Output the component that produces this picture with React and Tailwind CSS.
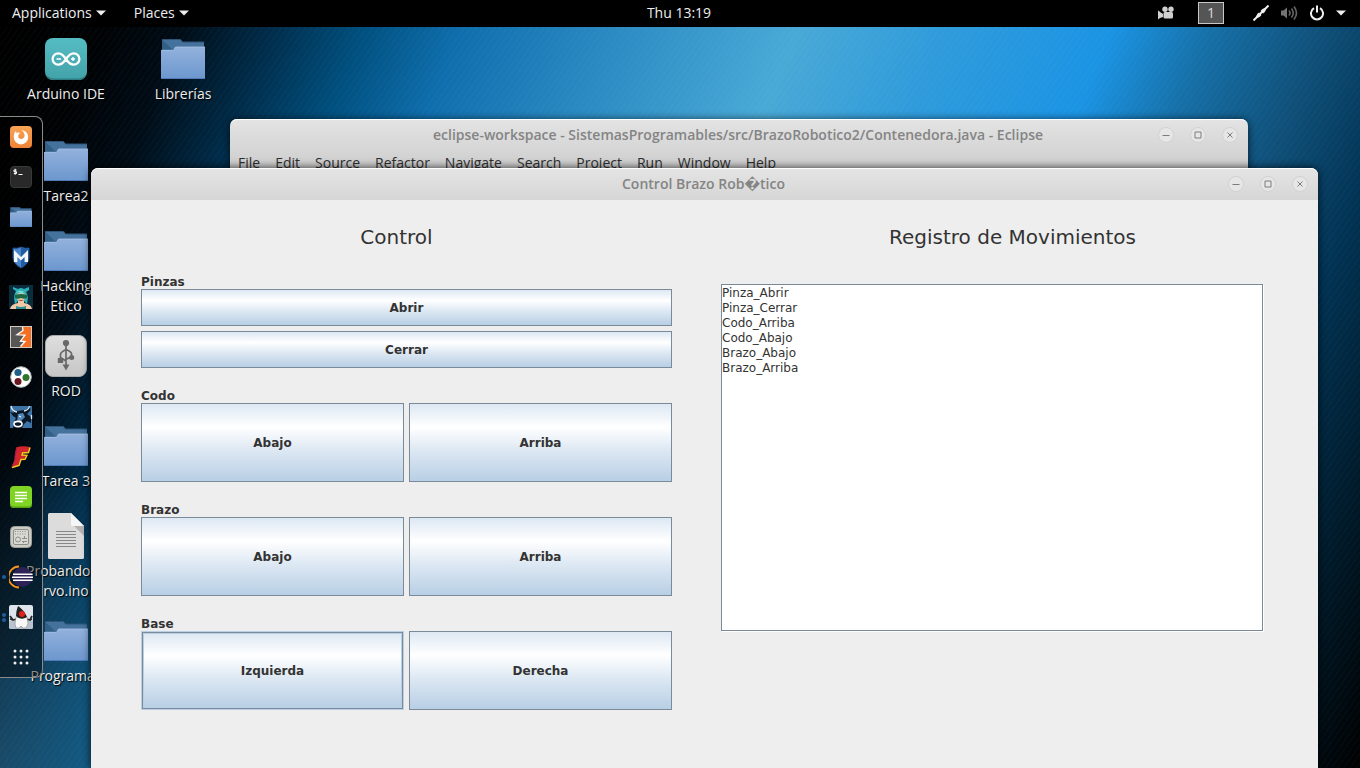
import React from "react";

const UI = "font-['Open_Sans','Noto_Sans',sans-serif]";

function Caret() {
  return (
    <svg viewBox="0 0 10 6" className="h-[6px] w-[10px]" fill="#eee" aria-hidden="true">
      <path d="M0 .5h10L5 5.5z" />
    </svg>
  );
}

function Folder({ className }) {
  return (
    <svg viewBox="0 0 44 40" className={className} aria-hidden="true">
      <defs>
        <linearGradient id="folderFront" x1="0" y1="0" x2="0" y2="1">
          <stop offset="0" stopColor="#92b1dc" />
          <stop offset="1" stopColor="#6c97ce" />
        </linearGradient>
      </defs>
      <path d="M1 .5h18.500l2 2.500H43v12H1z" fill="#44729c" />
      <path d="M1 .5l10 9.500H1z" fill="#335f87" />
      <path d="M1 .5h18.500l2 2.500H43" fill="none" stroke="#2e5478" />
      <path d="M0 11.500h12.500l2-3.500H44v32H0z" fill="url(#folderFront)" />
      <path d="M0 11.500h12.500l2-3.500H44" fill="none" stroke="#a9c3e6" strokeWidth=".8" />
      <path d="M0 39.500h44" stroke="#4f7cb8" />
    </svg>
  );
}

function Arduino() {
  return (
    <svg viewBox="0 0 42 42" className="size-[42px]" aria-hidden="true">
      <defs>
        <linearGradient id="ard" x1="0" y1="0" x2="0" y2="1">
          <stop offset="0" stopColor="#55bcc4" />
          <stop offset="1" stopColor="#43a2a9" />
        </linearGradient>
      </defs>
      <rect width="42" height="42" rx="8" fill="url(#ard)" />
      <path d="M0 33a8 9 0 0 0 8 9h26a8 9 0 0 0 8-9a8 8 0 0 1-8 7.500H8A8 8 0 0 1 0 33" fill="#2f7c82" />
      <path d="M21 21c-2.500-3.800-5-5.700-7.700-5.700a5.700 5.700 0 0 0 0 11.400c2.700 0 5.200-1.900 7.700-5.700c2.500-3.800 5-5.700 7.700-5.700a5.700 5.700 0 0 1 0 11.400c-2.700 0-5.200-1.900-7.700-5.700z" fill="none" stroke="#fff" strokeWidth="2.300" />
      <path d="M11.500 21h4.500M26 21h4M28 19v4" stroke="#fff" strokeWidth="1.400" />
    </svg>
  );
}

function Usb() {
  return (
    <svg viewBox="0 0 42 42" className="size-[42px]" aria-hidden="true">
      <defs>
        <linearGradient id="usb" x1="0" y1="0" x2="0" y2="1">
          <stop offset="0" stopColor="#dedede" />
          <stop offset="1" stopColor="#c6c6c6" />
        </linearGradient>
      </defs>
      <rect x=".5" y=".5" width="41" height="41" rx="7.500" fill="url(#usb)" stroke="#a9a9a9" />
      <path d="M21 8v23M21 26l-5.500-3.500v-3.500q0-1.500 5.500-4.500M21 24.500l5.500-3v-3q0-1.500-5.500-4" fill="none" stroke="#686868" strokeWidth="1.700" />
      <g fill="#686868">
        <circle cx="21" cy="8" r="3.100" />
        <path d="M17.500 29.500h7L21 35.500z" />
        <rect x="12.800" y="23" width="5.400" height="5" />
        <circle cx="26.700" cy="22.500" r="2.500" />
      </g>
    </svg>
  );
}

function TextFile() {
  return (
    <svg viewBox="0 0 36 46" className="-mb-0.5 h-[46px] w-[36px]" aria-hidden="true">
      <path d="M1.500 0H23l13 13v31.500q0 1.500-1.500 1.500h-33Q0 46 0 44.500v-43Q0 0 1.500 0z" fill="#dcdcdc" />
      <path d="M24 11l12 12V13z" fill="#b2b2b2" />
      <path d="M23 0l13 13H24.500Q23 13 23 11.500z" fill="#f6f6f6" />
      <path d="M8 18.500h20M8 21.500h20M8 24.500h20M8 27.500h20M8 30.500h20M8 33.500h20" stroke="#878787" />
    </svg>
  );
}

function DesktopItem({ place, label, children }) {
  return (
    <a href="#" className={`absolute flex flex-col items-center text-[14px] leading-5 text-[#eeeeee] [text-shadow:1px_1px_1px_#000] ${place}`}>
      {children}
      <span className="mt-1 whitespace-pre text-center">{label}</span>
    </a>
  );
}

function DockSvg({ children }) {
  return (
    <svg viewBox="0 0 24 24" className="size-6" aria-hidden="true">
      {children}
    </svg>
  );
}

const dock = [
  {
    name: "Firefox",
    art: (
      <>
        <defs>
          <linearGradient id="ff" x1="0" y1="0" x2="0" y2="1">
            <stop offset="0" stopColor="#f9a456" />
            <stop offset="1" stopColor="#ee8236" />
          </linearGradient>
        </defs>
        <rect x="1" y="1" width="22" height="22" rx="4" fill="url(#ff)" />
        <path d="M5 9.500c.3-1.500 1-2.600 2-3.200c0 .8.300 1.400 1 1.600c1.300-.6 2.500-.4 3.300.3c-1.300.2-1.700.8-1.500 1.600c-.9.700-.9 2.900.6 3.700c2.600 1.200 5-.3 5.200-2.700c.2-2.300-1-4.400-3.400-5.600c4.200 0 7 3 7 7a7.200 7.200 0 0 1-14.400 0c0-1 0-1.800.2-2.700z" fill="#fff" />
      </>
    ),
  },
  {
    name: "Terminal",
    art: (
      <>
        <rect x="1.500" y="1.500" width="21" height="21" rx="3.500" fill="#292929" stroke="#393939" />
        <path d="M7.500 5H5v1.700h2.500v1.800H4.800M6.200 3.800v6M9.500 9.500h4" fill="none" stroke="#fff" />
      </>
    ),
  },
  { name: "Files" },
  {
    name: "Metasploit",
    art: (
      <>
        <path d="M4 3q4 1 8-1q4 2 8 1v10q-.5 6-8 10q-7.500-4-8-10z" fill="#4a86cc" stroke="#1c4f86" />
        <path d="M12 2q4 2 8 1v10q-.5 6-8 10z" fill="#1f5ca3" />
        <path d="M5 17V5l7 7l7-7v12h-3.400v-5L12 15.500L8.400 12v5z" fill="#f2f5f8" />
      </>
    ),
  },
  {
    name: "Armitage",
    art: (
      <>
        <rect width="24" height="24" fill="#0b2c3d" />
        <path d="M1 24q1-5 8-6v-3h6v3q7 1 8 6z" fill="#f1c9a8" />
        <path d="M6 19q-2-8 1-13l-3-2V2l5 2q3-2 6 0l5-2v3l-3 2q3 4 1 12l-3-3H9z" fill="#2fb0b6" />
        <path d="M8 9q4-3 8 0v5q-4 5-8 0z" fill="#edc29e" />
        <path d="M6 10q6-2 12 0v3q-3 1.500-6 0q-3 1.500-6 0z" fill="#1a6845" />
        <path d="M7 8q3-5 10 0l-2-1l-3 2l-2-2z" fill="#6ae0dc" />
        <path d="M7 21q5 2 10 0v3H7z" fill="#2b8f94" />
        <path d="M10.500 15.500h3" stroke="#b63535" />
      </>
    ),
  },
  {
    name: "Burp Suite",
    art: (
      <>
        <rect x="1.500" y="1.500" width="21" height="21" fill="#f26f24" />
        <path d="M2 2h11.500l.5 3l-6 4.500l7 1L11 16l5 .5L11 22H2z" fill="#565656" />
        <path d="M13.500 2l.5 3.500l-6 4.300l8 .4l-4.500 6l4.500.3l-4.500 5" fill="none" stroke="#fff" strokeWidth="1.300" />
        <rect x="1.500" y="1.500" width="21" height="21" fill="none" stroke="#d2c9c0" />
      </>
    ),
  },
  {
    name: "Maltego",
    art: (
      <>
        <circle cx="12" cy="12" r="10.300" fill="#fff" stroke="#b5b5b5" />
        <circle cx="9" cy="7.500" r="3.600" fill="#1f5f89" />
        <circle cx="17" cy="12.500" r="3.500" fill="#30742f" />
        <circle cx="9" cy="16.500" r="3.500" fill="#6d1421" />
      </>
    ),
  },
  {
    name: "BeEF",
    art: (
      <>
        <rect x="1" y="1" width="22" height="22" fill="#3d73a5" />
        <path d="M3 3q2 3 6 3l6-1q5 0 5-4q3 3 0 6l-2 2l4 3v6l-4-2l-3 3l-2 4H4l1-6l2-4l-3-2l-3-4l4 1z" fill="#0b1828" />
        <path d="M2 1q1 5 6 6M15 6q5-1 5.500-5M22.500 10v4" fill="none" stroke="#dce8f3" strokeWidth="1.300" />
        <path d="M9 9l5-1l2 4l-4 4l-4 1z" fill="#5488b8" />
        <ellipse cx="9" cy="19" rx="4" ry="2.600" fill="none" stroke="#fff" strokeWidth="1.600" />
        <path d="M10 11l2 1" stroke="#fff" />
      </>
    ),
  },
  {
    name: "Faraday",
    art: (
      <>
        <path d="M7 2.500Q13 .5 21 2l-2 5.500l-6 .5l-.5 1.500l5 .5l-2 4l-4 .5l-2 6.500l-7 2l3-8z" fill="#d3252d" />
        <path d="M21 2.500l-1.500 5l-6 .5l-.5 2l5 .3l-2 4l-4 .2l-2 6l-7 2" fill="none" stroke="#f2cd20" strokeWidth="1.400" />
        <path d="M8 2.500L6 11v4l-3 7" fill="none" stroke="#a81d4b" />
      </>
    ),
  },
  {
    name: "Notes",
    art: (
      <>
        <rect x="1" y="1" width="22" height="22" rx="4" fill="#80d524" />
        <path d="M1 18v1a4 4 0 0 0 4 4h14a4 4 0 0 0 4-4v-1q-1 3.500-4 3.500H5Q2 21.500 1 18" fill="#53a30d" />
        <path d="M6 7.500h12M6 10.500h12M6 13.500h12M6 16.500h8" stroke="#fff" strokeWidth="1.400" />
      </>
    ),
  },
  {
    name: "Tweaks",
    art: (
      <>
        <rect x="1.500" y="1.500" width="21" height="21" rx="4" fill="#cbcdc6" stroke="#9ea19a" />
        <rect x="4.500" y="4.500" width="15" height="15" rx="1.500" fill="#d8dad3" stroke="#8b8e87" />
        <path d="M6 6.500h12M6 9h12" stroke="#8b8e87" strokeWidth="1.200" strokeDasharray="1 1.400" />
        <circle cx="9" cy="14.500" r="2.500" fill="none" stroke="#8b8e87" />
        <path d="M13 13.500h5M13 16.500h5M15.500 11v3M14.500 16v2" stroke="#8b8e87" />
      </>
    ),
  },
  {
    name: "Eclipse",
    running: 1,
    art: (
      <>
        <path d="M10 1.500a10.500 10.500 0 0 0 0 21" fill="none" stroke="#f7941e" strokeWidth="1.800" />
        <circle cx="13.500" cy="12" r="10" fill="#2c2255" />
        <path d="M4 9.300h19.600M3 12.300h21M4 15.200h19.600" stroke="#fff" strokeWidth="1.500" />
      </>
    ),
  },
  {
    name: "Java",
    running: 2,
    art: (
      <>
        <rect width="24" height="24" rx="2" fill="#dfe5ed" />
        <path d="M0 16h24v6q0 2-2 2H2q-2 0-2-2z" fill="#b9c3d0" />
        <path d="M8 14l-4 1l-3-4M17 14l4 1l2-4M1 14l3 1M23 14l-2 1" fill="none" stroke="#282828" strokeWidth="1.800" />
        <path d="M7 12h11l1 7l-2 4h-3l-2-2l-2 2H7l-1-4z" fill="#f8f8f8" stroke="#777" strokeWidth=".5" />
        <path d="M9 1q-2 5-2 10q5 5 11 1Q15 5 9 1z" fill="#202020" />
        <circle cx="13" cy="9" r="3" fill="#e0201b" />
      </>
    ),
  },
  {
    name: "Show applications",
    art: (
      <g fill="#eee">
        {[6, 12, 18].map((y) => [6, 12, 18].map((x) => <circle key={`${x}-${y}`} cx={x} cy={y} r="1.500" />))}
      </g>
    ),
  },
];

function Dock() {
  return (
    <nav className="absolute top-[89px] left-0 flex w-[43px] flex-col gap-4 rounded-r-[8px] border border-l-0 border-[#8b8b8b] bg-black/40 pt-2 pb-2">
      {dock.map((d) => (
        <button key={d.name} type="button" aria-label={d.name} className="relative flex h-6 items-center justify-center">
          {d.running && (
            <span className="absolute left-[2px] flex flex-col gap-px">
              {Array.from({ length: d.running }, (_, i) => (
                <span key={i} className="size-[4px] rounded-full bg-[#215d9c]" />
              ))}
            </span>
          )}
          {d.art ? <DockSvg>{d.art}</DockSvg> : <Folder className="h-5 w-[22px]" />}
        </button>
      ))}
    </nav>
  );
}

function WindowButton({ label, d }) {
  return (
    <button type="button" aria-label={label} className="flex size-4 items-center justify-center rounded-full border border-[#d2d2d2] bg-[#e6e6e6]">
      <svg viewBox="0 0 8 8" className="size-2 shrink-0" fill="none" stroke="#7c7c7c" aria-hidden="true">
        <path d={d} />
      </svg>
    </button>
  );
}

function TitleBar({ title, className }) {
  return (
    <header className={`flex h-8 items-center border-t border-white pr-[10px] pb-0.5 ${className}`}>
      <h1 className="grow pl-[88px] text-center text-[14px] leading-5 font-semibold text-[#848484]">{title}</h1>
      <div className="flex gap-4">
        <WindowButton label="Minimize" d="M.5 4.500h7" />
        <WindowButton label="Maximize" d="M1 1h6v6h-6z" />
        <WindowButton label="Close" d="M1.500 1.500l5 5M6.500 1.500l-5 5" />
      </div>
    </header>
  );
}

function SwingButton({ children, focused, size }) {
  return (
    <button
      type="button"
      className={`border border-[#7a8a99] bg-[linear-gradient(to_bottom,#dde8f3_0%,#ffffff_30%,#dde8f3_60%,#b8cfe5_100%)] text-[12px] font-bold ${size} ${
        focused ? "m-px shadow-[0_0_0_1px_#b8cfe5,inset_0_0_0_1px_#b8cfe5]" : ""
      }`}
    >
      {children}
    </button>
  );
}

function Group({ title, cols, children }) {
  return (
    <fieldset>
      <legend className="h-[14px] text-[12px] leading-[14px] font-bold">{title}</legend>
      <div className={`grid gap-[5px] ${cols}`}>{children}</div>
    </fieldset>
  );
}

const menus = ["File", "Edit", "Source", "Refactor", "Navigate", "Search", "Project", "Run", "Window", "Help"];
const log = ["Pinza_Abrir", "Pinza_Cerrar", "Codo_Arriba", "Codo_Abajo", "Brazo_Abajo", "Brazo_Arriba"];

export default function App() {
  return (
    <div className={`flex h-screen flex-col overflow-hidden bg-black ${UI}`}>
      <header className="grid h-[27px] shrink-0 grid-cols-[1fr_auto_1fr] items-center bg-black pr-[14px] pb-0.5 pl-3 text-[14px] leading-5 text-[#eeeeee]">
        <nav className="flex gap-7">
          <button type="button" className="flex items-center gap-1">Applications <Caret /></button>
          <button type="button" className="flex items-center gap-1">Places <Caret /></button>
        </nav>
        <time>Thu 13:19</time>
        <div className="flex items-center justify-end">
          <svg viewBox="0 0 16 14" className="mr-6 h-[14px] w-4" fill="#d0d0d0" aria-label="Recorder">
            <circle cx="7" cy="3.200" r="2.700" />
            <circle cx="13" cy="3.200" r="2.700" />
            <rect x="5.500" y="6" width="9.500" height="6.500" rx="1.500" />
            <path d="M0 4.500q1 0 2 1.500l3 2v3l-3 1l-2 1.500z" />
          </svg>
          <button type="button" className="mr-[29px] h-[22px] w-[26px] border border-[#c8c8c8] bg-[#555555] leading-5 text-[#dddddd]">1</button>
          <svg viewBox="0 0 16 16" className="mr-3 size-4" aria-label="Wired network">
            <path d="M.5 15.500L15.500.5" stroke="#eee" strokeWidth="2" />
            <path d="M3 13q0-3.500 3-5.500l2.500 2.500q-2 3-5.500 3zM13 3q0 3.500-3 5.500L7.500 6Q9.500 3 13 3z" fill="#eee" />
          </svg>
          <svg viewBox="0 0 17 16" className="mr-3 h-4 w-[17px]" fill="none" stroke="#666" strokeWidth="1.600" aria-label="Volume">
            <path d="M0 5.500h2.500L6 2.500v11l-3.500-3H0z" fill="#747474" stroke="none" />
            <path d="M8 5.500q2 2.500 0 5M10.500 3.500q3.500 4.500 0 9M13 1.500q5 6.500 0 13" />
          </svg>
          <svg viewBox="0 0 14 16" className="mr-3 h-4 w-[14px]" fill="none" stroke="#eee" strokeWidth="2" aria-label="Power">
            <path d="M4 3.200a6 6 0 1 0 6 0M7 .5v7" />
          </svg>
          <Caret />
        </div>
      </header>

      <main className="relative grow overflow-hidden bg-[repeating-linear-gradient(125deg,rgba(255,255,255,0.02)_0px_1px,transparent_2px_5px),radial-gradient(circle_at_0%_100%,rgba(50,95,120,0.5)_0px,transparent_320px),linear-gradient(112deg,#000_0%,#000204_6%,#000c16_11%,#003050_17%,#00507f_22%,#0f6fae_28%,#2b8ac2_37%,#49a9d6_48%,#2f9bdb_57%,#1b94e4_67%,#1670a8_73%,#0f4f78_80%,#013354_86%,#001a2a_93%,#000_100%)]">
        <DesktopItem place="top-[11px] left-[20px] w-[92px]" label="Arduino IDE"><Arduino /></DesktopItem>
        <DesktopItem place="top-[12px] left-[137px] w-[92px]" label="Librerías"><Folder className="mb-px h-10 w-11" /></DesktopItem>
        <DesktopItem place="top-[114px] left-[20px] w-[92px]" label="Tarea2"><Folder className="mb-px h-10 w-11" /></DesktopItem>
        <DesktopItem place="top-[204px] left-[20px] w-[92px]" label={"Hacking\nEtico"}><Folder className="mb-px h-10 w-11" /></DesktopItem>
        <DesktopItem place="top-[308px] left-[20px] w-[92px]" label="ROD"><Usb /></DesktopItem>
        <DesktopItem place="top-[399px] left-[20px] w-[92px]" label="Tarea 3"><Folder className="mb-px h-10 w-11" /></DesktopItem>
        <DesktopItem place="top-[486px] left-[20px] w-[92px]" label={"ProbandoSe\nrvo.ino"}><TextFile /></DesktopItem>
        <DesktopItem place="top-[594px] left-[20px] w-[92px]" label="Programas"><Folder className="mb-px h-10 w-11" /></DesktopItem>

        <Dock />

        <section className="absolute top-[92px] right-[112px] left-[230px] h-[400px] rounded-t-[7px] bg-linear-to-b from-[#e4e4e4] to-[#cccccc] to-[52px] shadow-[0_1px_8px_rgba(0,0,0,0.75)]">
          <TitleBar title="eclipse-workspace - SistemasProgramables/src/BrazoRobotico2/Contenedora.java - Eclipse" className="rounded-t-[7px]" />
          <nav className="flex gap-[15px] pt-[2px] pl-2 text-[14px] leading-5 text-[#2e2e2e]">
            {menus.map((m) => (
              <button key={m} type="button">{m}</button>
            ))}
          </nav>
        </section>

        <section className="absolute top-[141px] right-[42px] bottom-0 left-[91px] rounded-t-[7px] bg-[#eeeeee] shadow-[0_0_8px_rgba(0,0,0,0.8)]">
          <TitleBar
            title={<>Control Brazo Rob<span className="font-['DejaVu_Sans',sans-serif]">{"\uFFFD"}</span>tico</>}
            className="rounded-t-[7px] bg-linear-to-b from-[#e4e4e4] to-[#d6d6d6]"
          />
          <div className="grid grid-cols-[531fr_542fr] gap-[49px] pr-[55px] pl-[50px] font-['DejaVu_Sans',sans-serif] text-[#333333]">
            <div className="pt-6">
              <h2 className="pr-5 text-center text-[20px] leading-[26px]">Control</h2>
              <div className="mt-[25px] flex flex-col gap-[21px]">
                <Group title="Pinzas" cols="grid-cols-1">
                  <SwingButton size="h-[37px]">Abrir</SwingButton>
                  <SwingButton size="h-[37px]">Cerrar</SwingButton>
                </Group>
                <Group title="Codo" cols="grid-cols-2">
                  <SwingButton size="h-[79px]">Abajo</SwingButton>
                  <SwingButton size="h-[79px]">Arriba</SwingButton>
                </Group>
                <Group title="Brazo" cols="grid-cols-2">
                  <SwingButton size="h-[79px]">Abajo</SwingButton>
                  <SwingButton size="h-[79px]">Arriba</SwingButton>
                </Group>
                <Group title="Base" cols="grid-cols-2">
                  <SwingButton size="h-[77px]" focused>Izquierda</SwingButton>
                  <SwingButton size="h-[79px]">Derecha</SwingButton>
                </Group>
              </div>
            </div>
            <div className="flex flex-col pt-6">
              <label htmlFor="log" className="pl-[41px] text-center text-[20px] leading-[26px]">Registro de Movimientos</label>
              <textarea
                id="log"
                readOnly
                defaultValue={log.join("\n")}
                className="mt-[34px] h-[347px] resize-none border border-[#7a8a99] bg-white pt-px text-[12px] leading-[15px] shadow-[1px_1px_0_#fff] outline-none"
              />
            </div>
          </div>
        </section>
      </main>
    </div>
  );
}
